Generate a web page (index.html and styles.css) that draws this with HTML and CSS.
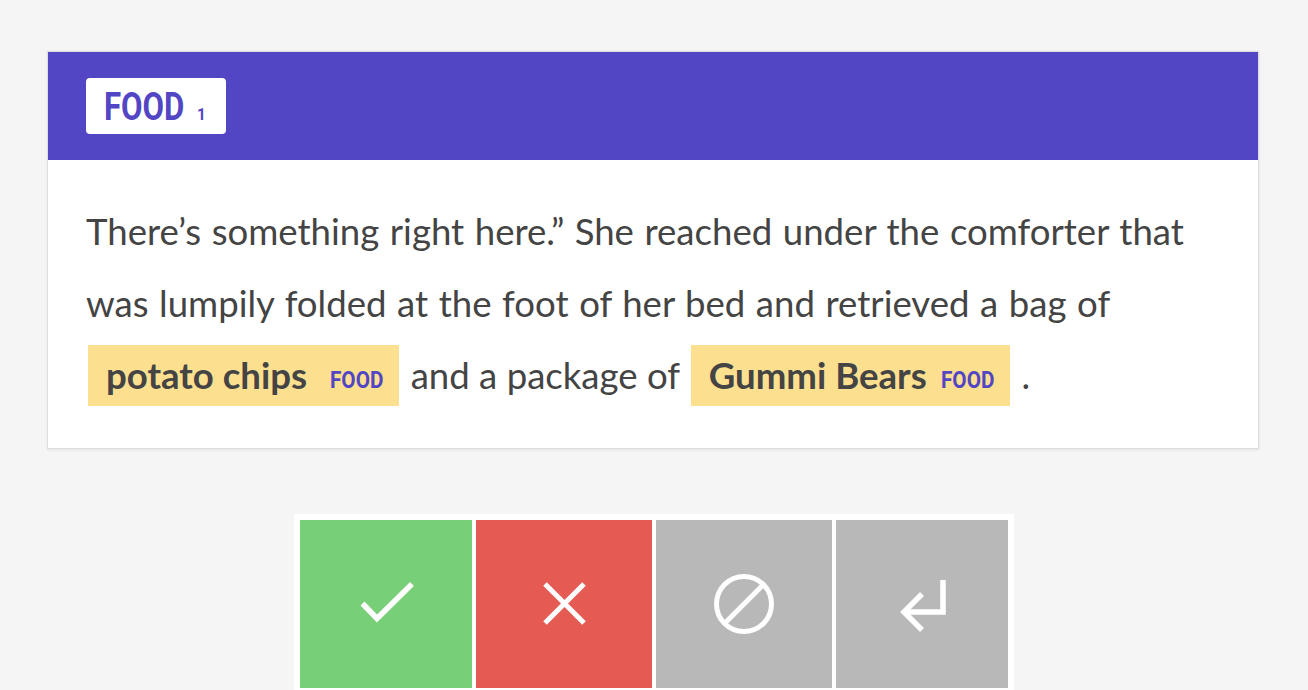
FILE: index.html
```html
<!DOCTYPE html>
<html>
<head>
<meta charset="utf-8">
<link rel="stylesheet" href="styles.css">
</head>
<body>
<main class="page">
  <section class="card">
    <header class="card-header">
      <span class="label"><span class="label-name">FOOD</span><span class="label-key">1</span></span>
    </header>
    <div class="card-body"><span class="tokens">There’s something right here.” She reached under the comforter that was lumpily folded at the foot of her bed and retrieved a bag of</span> <mark class="ent">potato chips <span class="ent-label">FOOD</span></mark> and a package of <mark class="ent">Gummi Bears<span class="ent-label">FOOD</span></mark> .</div>
  </section>
  <div class="actions">
    <button class="btn btn-accept" aria-label="accept">
      <svg width="80" height="80" viewBox="0 0 80 80"><path d="M16.5 39.5 L31 54.5 L66 20" fill="none" stroke="#fff" stroke-width="5.5"/></svg>
    </button>
    <button class="btn btn-reject" aria-label="reject">
      <svg width="80" height="80" viewBox="0 0 80 80"><path d="M21 20 L60 59 M60 20 L21 59" fill="none" stroke="#fff" stroke-width="5"/></svg>
    </button>
    <button class="btn btn-ignore" aria-label="ignore">
      <svg width="80" height="80" viewBox="0 0 80 80"><circle cx="40" cy="40" r="27.5" fill="none" stroke="#fff" stroke-width="5"/><path d="M21 59 L59 21" stroke="#fff" stroke-width="5"/></svg>
    </button>
    <button class="btn btn-undo" aria-label="undo">
      <svg width="80" height="80" viewBox="0 0 80 80"><path d="M61 16 V48 H22" fill="none" stroke="#fff" stroke-width="5.5"/><path d="M40 30 L22 48 L40 66" fill="none" stroke="#fff" stroke-width="5.5"/></svg>
    </button>
  </div>
</main>
</body>
</html>
```
FILE: styles.css
```css
html, body {
  margin: 0;
  padding: 0;
  background: #f5f5f5;
}
body {
  font-family: Lato, "Open Sans", sans-serif;
  color: #444;
  height: 690px;
  overflow: hidden;
}
.page {
  display: flex;
  flex-direction: column;
  align-items: center;
  padding-top: 51px;
}
.card {
  width: 1210px;
  margin-right: 2px;
  background: #fff;
  border: 1px solid #ddd;
  box-shadow: 0 1px 3px rgba(0,0,0,0.08);
}
.card-header {
  background: #5246c4;
  height: 108px;
  display: flex;
  align-items: center;
  padding: 0 38px;
}
.label {
  display: inline-block;
  background: #fff;
  color: #5246c4;
  border-radius: 4px;
  height: 56px;
  width: 140px;
  box-sizing: border-box;
  padding: 1px 0 0 18px;
  line-height: 56px;
  white-space: nowrap;
  font-family: Roboto, "Liberation Sans", sans-serif;
  font-weight: bold;
}
.label-name {
  display: inline-block;
  font-size: 38px;
  transform: scaleX(0.82);
  transform-origin: left center;
  margin-right: -18px;
}
.label-key {
  display: inline-block;
  font-size: 17px;
  margin-left: 13px;
  transform: scaleX(0.9);
  transform-origin: left center;
}
.card-body {
  padding: 35px 38px 37px;
  font-size: 36.6px;
  line-height: 72px;
}
.tokens {
  word-spacing: 1.2px;
}
.ent {
  background: #fce08f;
  color: #444;
  font-weight: bold;
  padding: 8px 16px 9px 18px;
  margin: 0 2px;
}
.ent-label {
  display: inline-block;
  line-height: 1;
  font-family: Roboto, "Liberation Sans", sans-serif;
  color: #5246c4;
  font-size: 23px;
  font-weight: bold;
  margin-left: 14px;
  vertical-align: 1px;
  transform: scaleX(0.9);
  transform-origin: left center;
  margin-right: -6px;
}
.actions {
  margin-top: 65px;
  background: #fff;
  padding: 6px;
  display: flex;
  gap: 4px;
}
.btn {
  width: 172px;
  height: 168px;
  border: none;
  padding: 0;
  display: flex;
  align-items: center;
  justify-content: center;
}
.btn-accept { background: #77d077; }
.btn-reject { background: #e55a52; width: 176px; }
.btn-ignore { background: #b8b8b8; width: 176px; }
.btn-undo { background: #b8b8b8; }
```
